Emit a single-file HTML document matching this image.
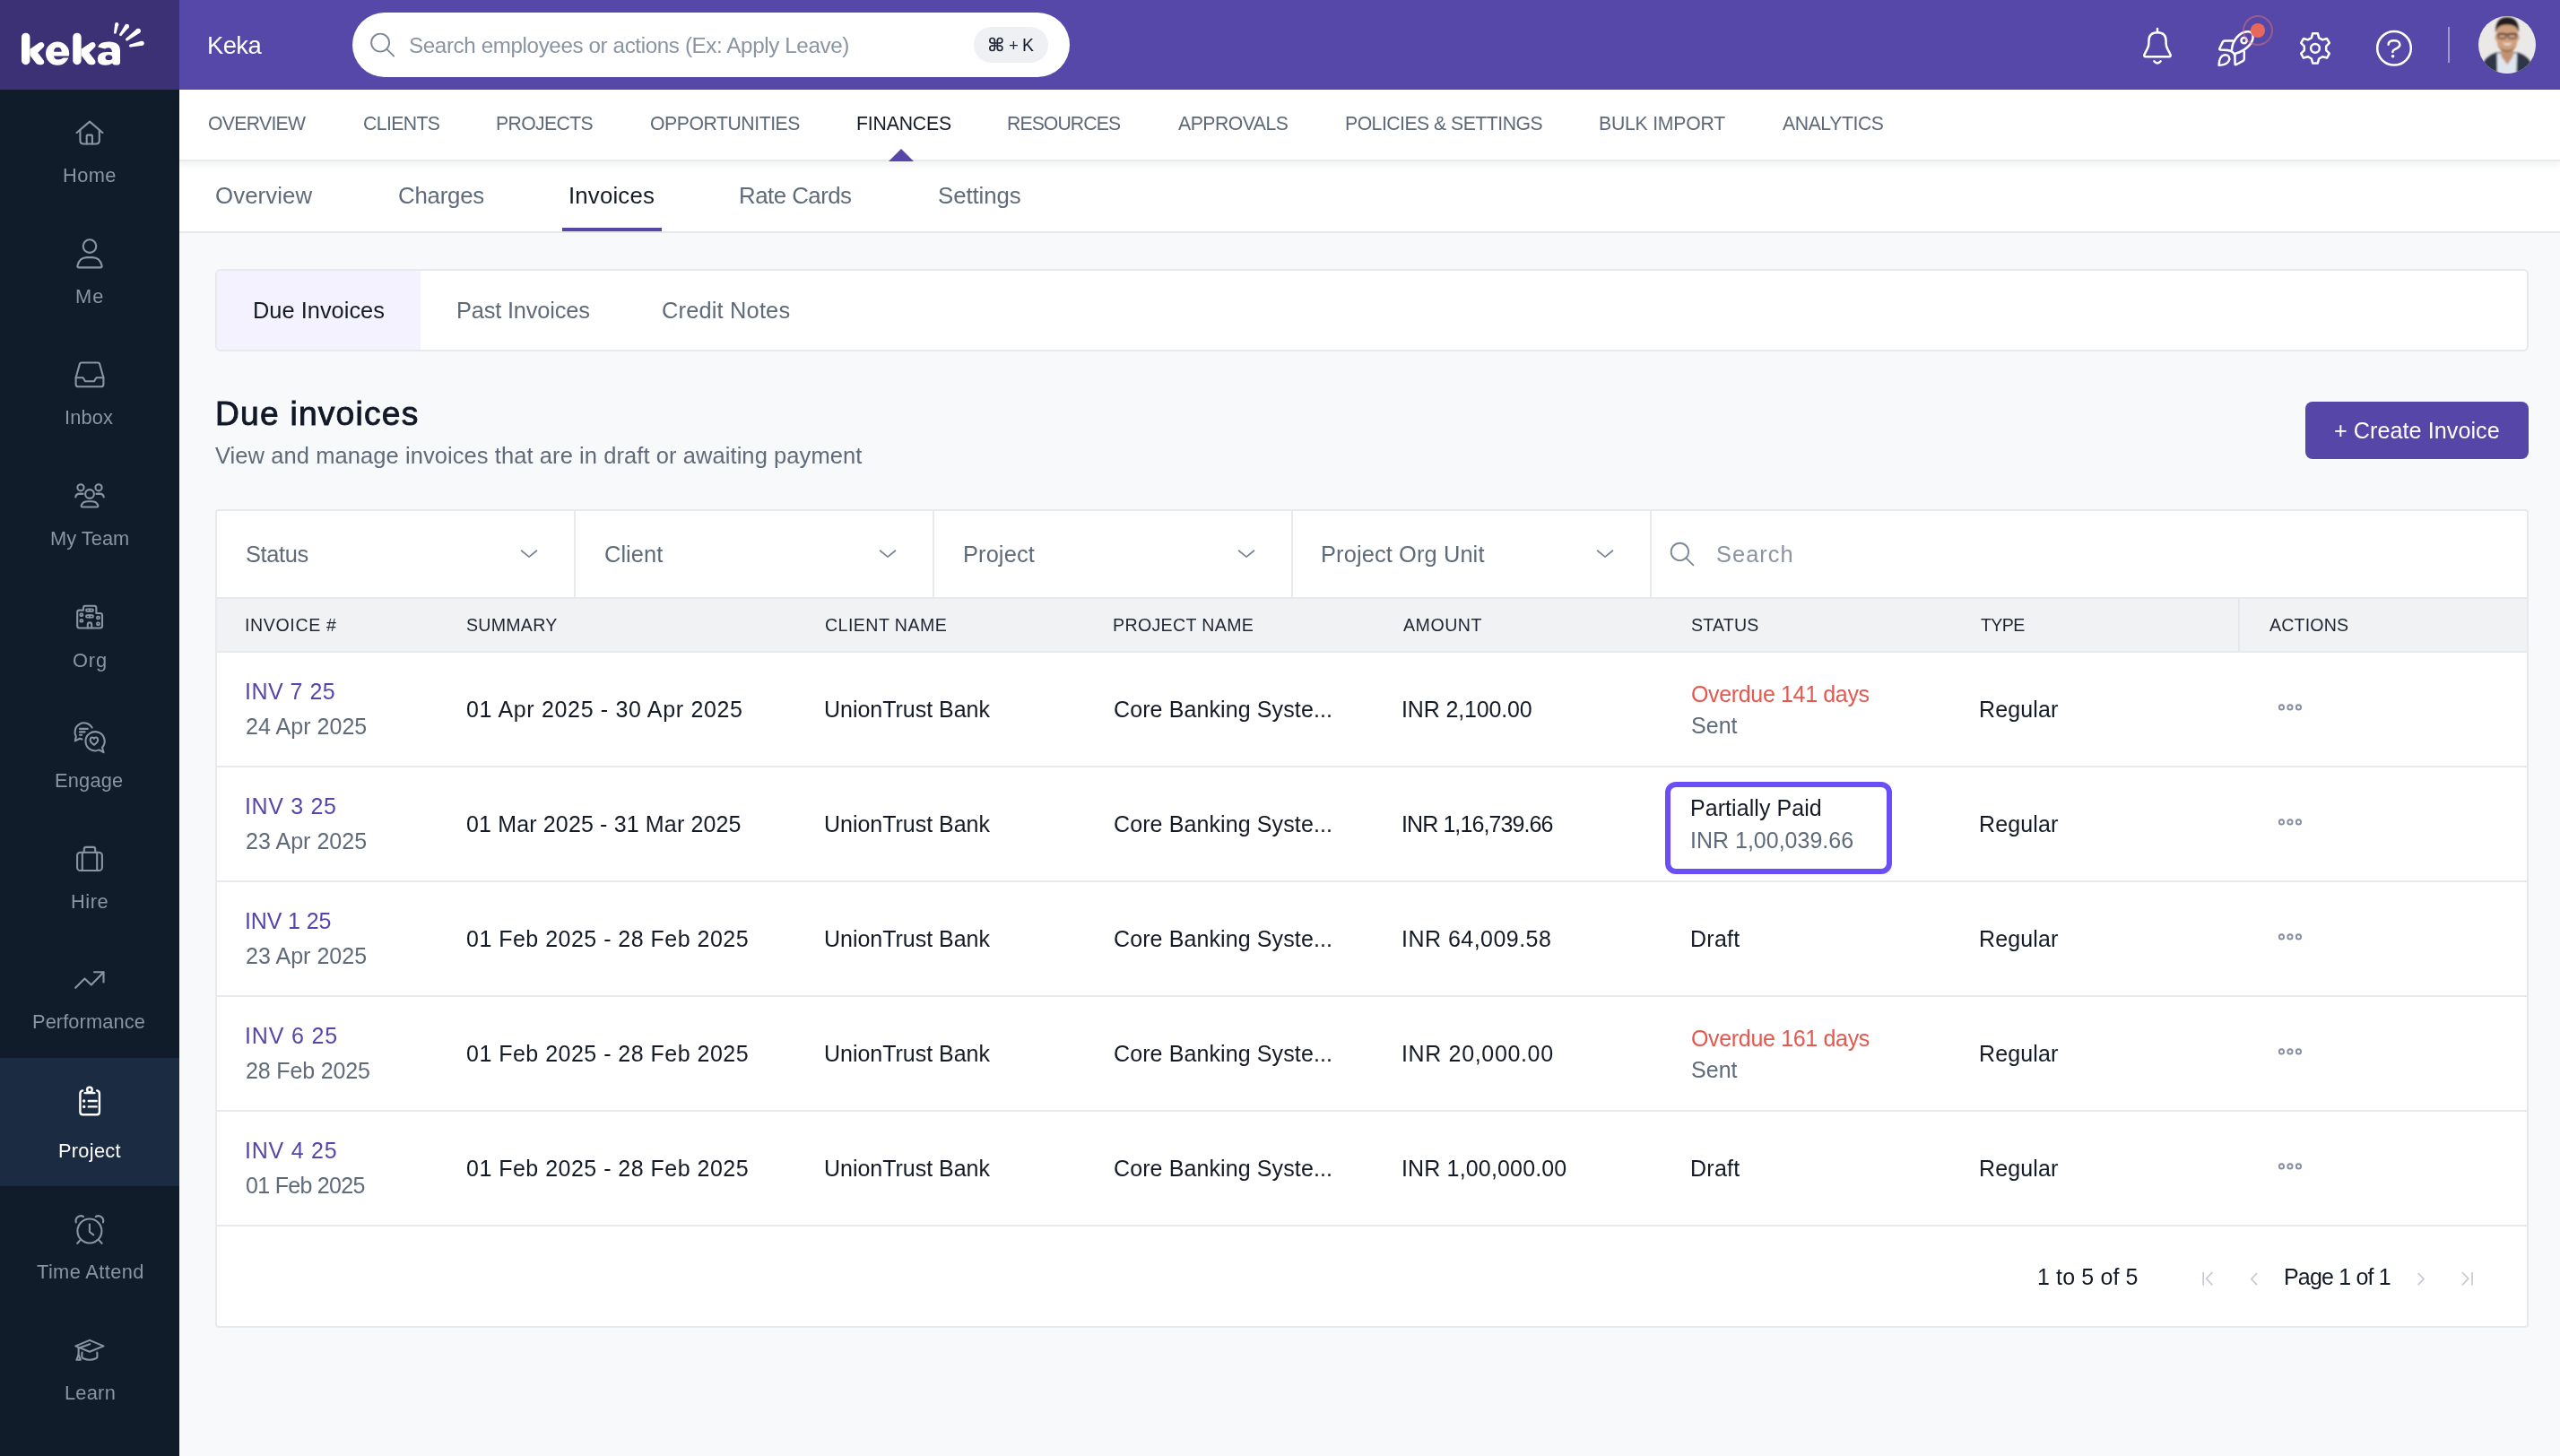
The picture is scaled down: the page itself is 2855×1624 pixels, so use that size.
<!DOCTYPE html><html><head><meta charset="utf-8"><style>
html,body{margin:0;padding:0;}
body{width:2855px;height:1624px;position:relative;overflow:hidden;background:#f8f9fb;font-family:"Liberation Sans",sans-serif;}
.a{position:absolute;box-sizing:border-box;}
.t{position:absolute;white-space:nowrap;line-height:1;will-change:transform;}
svg.ov{position:absolute;left:0;top:0;}
</style></head><body>
<div class="a" style="left:0;top:0;width:200px;height:100px;background:#3d3176"></div>
<div class="a" style="left:200px;top:0;width:2655px;height:100px;background:#5548a8"></div>
<div class="a" style="left:0;top:100px;width:200px;height:1524px;background:#111c2a"></div>
<div class="a" style="left:0;top:1180px;width:200px;height:143px;background:#1b2b42"></div>
<div class="a" style="left:200px;top:178px;width:2655px;height:82px;background:#fff;border-bottom:2px solid #e6e8eb"></div>
<div class="a" style="left:200px;top:100px;width:2655px;height:80px;background:#fff;border-bottom:2px solid #e9eaec;box-shadow:0 3px 8px rgba(17,24,39,0.07)"></div>
<div class="a" style="left:393px;top:14px;width:800px;height:72px;background:#fff;border-radius:36px"></div>
<div class="a" style="left:1086px;top:30px;width:83px;height:40px;background:#eff0f3;border-radius:20px"></div>
<div class="a" style="left:240px;top:300px;width:2580px;height:92px;background:#fff;border:2px solid #e8e9ec;border-radius:6px;overflow:hidden"><div class="a" style="left:0;top:0;width:227px;height:88px;background:#f4f2fe"></div></div>
<div class="a" style="left:2571px;top:448px;width:249px;height:64px;background:#5546a8;border-radius:8px"></div>
<div class="a" style="left:240px;top:568px;width:2580px;height:913px;background:#fff;border:2px solid #e8e9ec;border-radius:4px"></div>
<div class="a" style="left:242px;top:668px;width:2576px;height:58px;background:#f1f2f4"></div>
<div class="a" style="left:242px;top:666px;width:2576px;height:2px;background:#e8e9ec"></div>
<div class="a" style="left:242px;top:726px;width:2576px;height:2px;background:#e8e9ec"></div>
<div class="a" style="left:242px;top:854px;width:2576px;height:2px;background:#e8e9ec"></div>
<div class="a" style="left:242px;top:982px;width:2576px;height:2px;background:#e8e9ec"></div>
<div class="a" style="left:242px;top:1110px;width:2576px;height:2px;background:#e8e9ec"></div>
<div class="a" style="left:242px;top:1238px;width:2576px;height:2px;background:#e8e9ec"></div>
<div class="a" style="left:242px;top:1366px;width:2576px;height:2px;background:#e8e9ec"></div>
<div class="a" style="left:640px;top:570px;width:2px;height:96px;background:#e8e9ec"></div>
<div class="a" style="left:1040px;top:570px;width:2px;height:96px;background:#e8e9ec"></div>
<div class="a" style="left:1440px;top:570px;width:2px;height:96px;background:#e8e9ec"></div>
<div class="a" style="left:1840px;top:570px;width:2px;height:96px;background:#e8e9ec"></div>
<div class="a" style="left:2496px;top:668px;width:2px;height:58px;background:#e6e7ea"></div>
<div class="a" style="left:1857px;top:872px;width:253px;height:103px;border:6px solid #6a4ff6;border-radius:12px"></div>
<svg class="ov" width="2855" height="1624" viewBox="0 0 2855 1624">
<g fill="#fff">
<g transform="translate(0,0)"><path d="M28.7,41.4 L28.7,67.5" stroke="#fff" stroke-width="9.4" stroke-linecap="round"/><path d="M33.4,54.8 L43.6,47.8 Q47.6,45.6 49.2,49.4 Q49.8,51 48.6,52.4 L42.2,58.8 L48.8,67.4 Q50.4,71.6 46,72.2 L44,72.2 Q41.6,72.2 40.2,70.4 L33.4,61.8 Z"/></g>
<g transform="translate(57.25,0)"><path d="M28.7,41.4 L28.7,67.5" stroke="#fff" stroke-width="9.4" stroke-linecap="round"/><path d="M33.4,54.8 L43.6,47.8 Q47.6,45.6 49.2,49.4 Q49.8,51 48.6,52.4 L42.2,58.8 L48.8,67.4 Q50.4,71.6 46,72.2 L44,72.2 Q41.6,72.2 40.2,70.4 L33.4,61.8 Z"/></g>
<circle cx="64.1" cy="59.7" r="13.1"/><path d="M60,57.8 Q60.4,52.8 64.4,52.8 Q68.4,52.8 68.8,57.8 Z" fill="#3d3176"/><path d="M60,62.5 L78,62.5 L78,64.4 L70.6,64.6 Q68.4,66.6 64.6,66.6 Q60.8,66.6 60,62.5 Z" fill="#3d3176"/>
<path d="M109.2,52.6 Q110.6,46.6 121.4,46.6 Q134,46.6 134,57 L134,69.6 Q134,72.4 131.2,72.4 L127.8,72.4 Q125.8,72.4 125.2,70.6 Q122.4,72.8 117.2,72.8 Q108.8,72.8 108.8,65.6 Q108.8,58 119,58 L125,58 Q124.6,53.2 121.2,53.2 Q118.4,53.2 117.2,54.6 Z"/><ellipse cx="121.4" cy="64.2" rx="3.9" ry="2.9" fill="#3d3176"/>
</g>
<path d="M129.57,36.76 L132.26,27.62 L128.14,26.78 L127.03,36.24Z" fill="#fff"/><circle cx="128.3" cy="36.5" r="1.3" fill="#fff"/><circle cx="130.2" cy="27.2" r="2.1" fill="#fff"/>
<path d="M135.63,39.62 L143.52,30.67 L139.48,27.73 L133.37,37.98Z" fill="#fff"/><circle cx="134.5" cy="38.8" r="1.4" fill="#fff"/><circle cx="141.5" cy="29.2" r="2.5" fill="#fff"/>
<path d="M142.40,45.20 L155.82,36.66 L152.58,32.34 L140.60,42.80Z" fill="#fff"/><circle cx="141.5" cy="44.0" r="1.5" fill="#fff"/><circle cx="154.2" cy="34.5" r="2.7" fill="#fff"/>
<path d="M145.82,52.46 L158.74,50.64 L157.66,45.76 L145.18,49.54Z" fill="#fff"/><circle cx="145.5" cy="51.0" r="1.5" fill="#fff"/><circle cx="158.2" cy="48.2" r="2.5" fill="#fff"/>
<g fill="none" stroke="#1f2937" stroke-width="1.7" stroke-linecap="round"><path d="M1109.35,45.25 L1109.35,53.75 M1112.35,45.25 L1112.35,53.75 M1106.6,48.0 L1115.1,48.0 M1106.6,51.0 L1115.1,51.0"/><path d="M1109.35,45.25 A2.75,2.75 0 1 0 1106.6,48.0 M1112.35,45.25 A2.75,2.75 0 1 1 1115.1,48.0 M1112.35,53.75 A2.75,2.75 0 1 0 1115.1,51.0 M1109.35,53.75 A2.75,2.75 0 1 1 1106.6,51.0"/></g>
<g fill="none" stroke="#7d8898" stroke-width="1.9" stroke-linecap="round"><circle cx="424.1" cy="47.6" r="10"/><path d="M431.4,54.9 L439.2,62.6"/></g>
<g fill="none" stroke="#fff" stroke-width="2.5" stroke-linecap="round" stroke-linejoin="round">
<path d="M2406,32 L2406,35.5"/>
<path d="M2393.2,63.2 L2418.8,63.2 Q2421.6,63.2 2420.4,60.6 L2417.2,54.4 Q2415.6,51.4 2415.6,48 L2415.6,45.8 Q2415.6,36.2 2406,36.2 Q2396.4,36.2 2396.4,45.8 L2396.4,48 Q2396.4,51.4 2394.8,54.4 L2391.6,60.6 Q2390.4,63.2 2393.2,63.2 Z"/>
<path d="M2402.4,68.2 Q2406,72.6 2409.6,68.2"/>
<path d="M2489,55.4 C2489.6,45.4 2497.4,35.4 2506.6,35.2 C2511,35.1 2513,37.6 2512.6,41.6 C2512,49.6 2503.6,56.6 2493,59.8"/><path d="M2484,56 Q2490.6,56.4 2492.4,62"/>
<path d="M2489.8,45.4 L2481,45.4 Q2479.6,45.4 2479,46.6 L2475.4,54 Q2474.8,55.4 2476.4,55.5 L2484,56"/>
<path d="M2502.8,57.8 L2502.8,65.8 Q2502.8,67.2 2501.6,67.8 L2494,72 Q2492.6,72.8 2492.6,71.2 L2492.4,62"/>
<path d="M2474.6,72.8 C2474.6,67 2476.6,61.6 2481.4,61.2 C2485.6,61 2487.4,64.6 2485.6,68 C2483.8,71.4 2479,72.8 2474.6,72.8 Z"/>
<circle cx="2502.6" cy="45.2" r="3.1"/>
</g>
<circle cx="2518" cy="34" r="16" fill="none" stroke="rgba(236,120,110,0.45)" stroke-width="2"/>
<circle cx="2518" cy="34" r="8.1" fill="#e8685c"/>
<g fill="none" stroke="#fff" stroke-width="2.5" stroke-linejoin="round" stroke-linecap="round"><path d="M2577.86,42.11 L2579.21,37.13 L2584.79,37.13 L2586.14,42.11 L2590.05,44.37 L2595.04,43.05 L2597.83,47.88 L2594.19,51.54 L2594.19,56.06 L2597.83,59.72 L2595.04,64.55 L2590.05,63.23 L2586.14,65.49 L2584.79,70.47 L2579.21,70.47 L2577.86,65.49 L2573.95,63.23 L2568.96,64.55 L2566.17,59.72 L2569.81,56.06 L2569.81,51.54 L2566.17,47.88 L2568.96,43.05 L2573.95,44.37Z"/><circle cx="2582" cy="53.8" r="4.9"/>
<circle cx="2670" cy="53.8" r="18.8"/><path d="M2663.6,49.8 C2663.6,46.8 2666.4,45.2 2670,45.2 C2673.8,45.2 2676.4,47 2676.4,49.8 C2676.4,52.8 2673.4,53.8 2670.6,55.2 C2668.8,56 2668.4,56.8 2668.4,58"/></g>
<circle cx="2668.6" cy="62.8" r="1.8" fill="#fff"/>
<path d="M2731,30 L2731,70" stroke="rgba(255,255,255,0.45)" stroke-width="2"/>
<defs><clipPath id="av"><circle cx="2796" cy="50" r="32"/></clipPath><filter id="bl" filterUnits="userSpaceOnUse" x="2750" y="5" width="100" height="95"><feGaussianBlur stdDeviation="0.9"/></filter></defs>
<g clip-path="url(#av)"><rect x="2760" y="14" width="72" height="72" fill="#ebe9e7"/><g filter="url(#bl)">
<path d="M2766,86 L2767,76 Q2770,63 2784,58.6 L2808,58.6 Q2822,63 2825,76 L2826,86 Z" fill="#2e3446"/>
<path d="M2784.6,59.5 L2807,59.5 L2806.4,86 L2785.2,86 Z" fill="#dfe5ee"/>
<path d="M2789,54 L2803,54 L2802.6,63 L2796.2,72 L2789.6,63 Z" fill="#c29170"/>
<ellipse cx="2784.6" cy="41.5" rx="1.9" ry="3.6" fill="#c89775"/><ellipse cx="2807.6" cy="41.5" rx="1.9" ry="3.6" fill="#c89775"/>
<path d="M2784.5,36 Q2784.5,25.5 2796,25.5 Q2807.5,25.5 2807.5,36 L2807.5,46 Q2806.5,57.5 2796,59 Q2785.5,57.5 2784.5,46 Z" fill="#d0a07d"/>
<path d="M2786.5,50.5 Q2788,57 2796,58.6 Q2804,57 2805.5,50.5 Q2803,55.5 2796,56 Q2789,55.5 2786.5,50.5 Z" fill="#5a4030" opacity="0.55"/>
<path d="M2783.2,36.5 Q2782.5,19 2796.2,19.2 Q2809.6,19.4 2809,36.5 L2807.6,33.6 Q2806.6,27.6 2796,27.4 Q2785.8,27.6 2784.6,33.6 Z" fill="#221c1a"/>
<path d="M2785,38.2 L2807.4,38.2" stroke="#3a3431" stroke-width="1.2"/><rect x="2786.2" y="37.4" width="8.6" height="5.4" rx="1.8" fill="none" stroke="#3a3431" stroke-width="1.3"/><rect x="2797.4" y="37.4" width="8.6" height="5.4" rx="1.8" fill="none" stroke="#3a3431" stroke-width="1.3"/>
<path d="M2790.5,47.6 Q2796.2,53.6 2802,47.6 Q2796.2,49.4 2790.5,47.6 Z" fill="#f3eded"/>
</g></g>
<path d="M991,180 L1005,166 L1019,180 Z" fill="#5546a8"/>
<rect x="627" y="254" width="111" height="4" fill="#5546a8"/>
<g fill="none" stroke="#7b8697" stroke-width="1.8" stroke-linecap="round" stroke-linejoin="round">
<path d="M581.6,614.2 L590.0500000000001,621.1 L598.4,614.2"/>
<path d="M981.6,614.2 L990.0500000000001,621.1 L998.4,614.2"/>
<path d="M1381.6,614.2 L1390.05,621.1 L1398.3999999999999,614.2"/>
<path d="M1781.6,614.2 L1790.05,621.1 L1798.3999999999999,614.2"/>
</g>
<g fill="none" stroke="#7d8898" stroke-width="1.9" stroke-linecap="round"><circle cx="1873.4" cy="615.4" r="9.7"/><path d="M1880.3,622.3 L1888.4,630.4"/></g>
<g fill="none" stroke="#858fa0" stroke-width="1.9"><circle cx="2544.45" cy="788.9" r="2.6"/><circle cx="2553.95" cy="788.9" r="2.6"/><circle cx="2563.45" cy="788.9" r="2.6"/></g>
<g fill="none" stroke="#858fa0" stroke-width="1.9"><circle cx="2544.45" cy="916.9" r="2.6"/><circle cx="2553.95" cy="916.9" r="2.6"/><circle cx="2563.45" cy="916.9" r="2.6"/></g>
<g fill="none" stroke="#858fa0" stroke-width="1.9"><circle cx="2544.45" cy="1044.9" r="2.6"/><circle cx="2553.95" cy="1044.9" r="2.6"/><circle cx="2563.45" cy="1044.9" r="2.6"/></g>
<g fill="none" stroke="#858fa0" stroke-width="1.9"><circle cx="2544.45" cy="1172.9" r="2.6"/><circle cx="2553.95" cy="1172.9" r="2.6"/><circle cx="2563.45" cy="1172.9" r="2.6"/></g>
<g fill="none" stroke="#858fa0" stroke-width="1.9"><circle cx="2544.45" cy="1300.9" r="2.6"/><circle cx="2553.95" cy="1300.9" r="2.6"/><circle cx="2563.45" cy="1300.9" r="2.6"/></g>
<g fill="none" stroke="#c5cad2" stroke-width="1.7" stroke-linecap="round" stroke-linejoin="round">
<path d="M2457.2,1419.5 L2457.2,1433"/><path d="M2467,1419.5 L2460.6,1426.2 L2467,1433"/>
<path d="M2516.6,1420.5 L2510.8,1426.6 L2516.6,1432.6"/>
<path d="M2697.2,1420.5 L2703,1426.6 L2697.2,1432.6"/>
<path d="M2746.4,1419.5 L2752.8,1426.2 L2746.4,1433"/><path d="M2757,1419.5 L2757,1433"/>
</g>
<g fill="none" stroke="#8a95a4" stroke-width="2.1" stroke-linecap="round" stroke-linejoin="round">
<path d="M85.6,148 L100,135.6 L114.4,148"/><path d="M89.4,145 L89.4,156.5 Q89.4,160.5 93.4,160.5 L106.8,160.5 Q110.8,160.5 110.8,156.5 L110.8,145"/><path d="M96.7,160.5 L96.7,151.6 Q96.7,150.6 97.7,150.6 L101.9,150.6 Q102.9,150.6 102.9,151.6 L102.9,160.5"/>
<circle cx="100" cy="274.6" r="7.3"/><path d="M88,298.4 L112,298.4 Q114,298.4 113.6,296.4 Q111.4,287.1 103,287.1 L97,287.1 Q88.6,287.1 86.4,296.4 Q86,298.4 88,298.4 Z"/>
<path d="M84.6,421.3 L89,405.6 Q89.4,404.5 90.6,404.5 L109.4,404.5 Q110.6,404.5 111,405.6 L115.4,421.3 L115.4,428.4 Q115.4,431.3 112.5,431.3 L87.5,431.3 Q84.6,431.3 84.6,428.4 Z"/><path d="M84.6,421.3 L92.6,421.3 L95,425.2 L105,425.2 L107.4,421.3 L115.4,421.3"/>
<circle cx="90" cy="543.8" r="3.6"/><circle cx="110" cy="543.8" r="3.6"/><circle cx="100" cy="551" r="4.9"/><path d="M92,565.5 L108,565.5 Q109.6,565.5 109.3,563.9 Q108,559.3 102,559.3 L98,559.3 Q92,559.3 90.7,563.9 Q90.4,565.5 92,565.5 Z"/><path d="M84.3,554.5 C84.5,551.5 86.5,550.6 89.5,550.6 L92.6,550.9"/><path d="M115.7,554.5 C115.5,551.5 113.5,550.6 110.5,550.6 L107.4,550.9"/>
<path d="M88.6,700.5 L111.6,700.5 Q114,700.5 114,698 L114,686.4 Q114,684 111.6,684 L107.4,684 L107.4,678.2 Q107.4,675.8 105,675.8 L95.4,675.8 Q93,675.8 93,678.2 L93,680.6 L88.6,680.6 Q86.2,680.6 86.2,683 L86.2,698 Q86.2,700.5 88.6,700.5 Z"/>
<g stroke-width="1.8"><rect x="96.1" y="679.3" width="7.8" height="2.6" rx="1"/><path d="M100,679.3 L100,681.9"/><rect x="96.1" y="686.1" width="7.8" height="2.6" rx="1"/><path d="M100,686.1 L100,688.7"/><rect x="89.4" y="684.4" width="2.9" height="2.6" rx="0.8"/><rect x="89.4" y="691.1" width="2.9" height="2.6" rx="0.8"/><rect x="108" y="687.7" width="2.9" height="2.6" rx="0.8"/><rect x="108" y="694.4" width="2.9" height="2.6" rx="0.8"/></g><path d="M97.8,700.5 L97.8,696.8 Q97.8,694.4 100,694.4 Q102.2,694.4 102.2,696.8 L102.2,700.5"/>
<path d="M102.6,811.6 A10,10 0 1 0 84.8,821.4 L83.8,826.4 L89,823.8 L91.4,824.6"/><path d="M89,812.9 L97.8,812.9 M89,816.4 L94.6,816.4 M89,819.7 L91.2,819.7"/>
<path d="M114,833.8 A10.6,10.6 0 1 0 110.5,836.4 L115.5,839.2 Z"/><path d="M104.9,830.8 C101.5,828.5 100.6,826.8 100.6,825.2 C100.6,822.3 103.8,821.6 104.9,823.8 C106,821.6 109.2,822.3 109.2,825.2 C109.2,826.8 108.3,828.5 104.9,830.8 Z"/>
<rect x="86.1" y="950.7" width="27.8" height="20.3" rx="3.6"/><path d="M93.8,950.7 L93.8,947.3 Q93.8,944.9 96.2,944.9 L103.8,944.9 Q106.2,944.9 106.2,947.3 L106.2,950.7"/><path d="M91.8,950.7 L91.8,971 M108.2,950.7 L108.2,971"/>
<path d="M84.2,1101.8 L94.4,1091.5 L101.8,1098.6 L115.4,1084.4"/><path d="M105,1084.3 L115.5,1084.3 L115.5,1095.4"/>
<circle cx="99.9" cy="1373" r="13.5"/><path d="M89.8,1382.9 L86.2,1386.8 M110,1382.9 L113.6,1386.8"/><path d="M84.8,1363.4 A5.6,5.6 0 0 1 93,1357"/><path d="M115,1363.4 A5.6,5.6 0 0 0 106.8,1357"/><path d="M99.9,1365.6 L99.9,1374 L104.3,1377.3"/>
<path d="M99.9,1494.9 L115.5,1501.4 L99.9,1507.7 L84.3,1501.4 Z"/><path d="M91.5,1508.6 L91.3,1513 Q91.3,1514.6 93,1515.3 Q99.9,1518.2 106.8,1515.3 Q108.5,1514.6 108.5,1513 L108.3,1508.6"/><path d="M87.6,1503.2 L87.6,1511.5"/><path d="M87.6,1511 L85.4,1516.8 L89.8,1516.8 Z"/><path d="M88,1503.4 L100.2,1499.2"/>
</g>
<g fill="none" stroke="#fff" stroke-width="2.4" stroke-linecap="round" stroke-linejoin="round"><path d="M92.2,1216.4 Q89.4,1217 89.4,1220 L89.4,1240.2 Q89.4,1243.2 92.4,1243.2 L107.9,1243.2 Q110.9,1243.2 110.9,1240.2 L110.9,1220 Q110.9,1217 108.1,1216.4"/><circle cx="99.9" cy="1215.4" r="2.8"/><path d="M94.6,1219.1 L105.4,1219.1"/><path d="M98.8,1228 L107.6,1228 M98.8,1234.4 L107.6,1234.4"/></g><circle cx="93.7" cy="1228" r="1.7" fill="#fff"/><circle cx="93.7" cy="1234.4" r="1.7" fill="#fff"/>
</svg>
<div class="t" style="left:230.74px;top:37.21px;font-size:27.4px;color:#ffffff;letter-spacing:-0.604px;">Keka</div>
<div class="t" style="left:456.41px;top:39.31px;font-size:24.2px;color:#8a94a3;letter-spacing:-0.384px;">Search employees or actions (Ex: Apply Leave)</div>
<div class="t" style="left:1125.12px;top:41.94px;font-size:18.5px;color:#1f2937;">+</div>
<div class="t" style="left:1140.20px;top:40.78px;font-size:19.4px;color:#111827;">K</div>
<div class="t" style="left:231.89px;top:127.45px;font-size:21.2px;color:#5e6978;letter-spacing:-0.683px;">OVERVIEW</div>
<div class="t" style="left:405.34px;top:127.45px;font-size:21.2px;color:#5e6978;letter-spacing:-0.593px;">CLIENTS</div>
<div class="t" style="left:553.45px;top:127.45px;font-size:21.2px;color:#5e6978;letter-spacing:-0.628px;">PROJECTS</div>
<div class="t" style="left:725.29px;top:127.45px;font-size:21.2px;color:#5e6978;letter-spacing:-0.435px;">OPPORTUNITIES</div>
<div class="t" style="left:954.65px;top:127.45px;font-size:21.2px;color:#141b26;letter-spacing:-0.145px;">FINANCES</div>
<div class="t" style="left:1123.35px;top:127.45px;font-size:21.2px;color:#5e6978;letter-spacing:-0.900px;">RESOURCES</div>
<div class="t" style="left:1314.45px;top:127.45px;font-size:21.2px;color:#5e6978;letter-spacing:-0.484px;">APPROVALS</div>
<div class="t" style="left:1499.75px;top:127.45px;font-size:21.2px;color:#5e6978;letter-spacing:-0.503px;">POLICIES &amp; SETTINGS</div>
<div class="t" style="left:1782.75px;top:127.45px;font-size:21.2px;color:#5e6978;letter-spacing:-0.209px;">BULK IMPORT</div>
<div class="t" style="left:1988.45px;top:127.45px;font-size:21.2px;color:#5e6978;letter-spacing:-0.403px;">ANALYTICS</div>
<div class="t" style="left:239.87px;top:206.16px;font-size:25.8px;color:#5f6b7a;letter-spacing:0.091px;">Overview</div>
<div class="t" style="left:444.21px;top:206.16px;font-size:25.8px;color:#5f6b7a;letter-spacing:-0.222px;">Charges</div>
<div class="t" style="left:634.11px;top:206.16px;font-size:25.8px;color:#141b26;letter-spacing:0.167px;">Invoices</div>
<div class="t" style="left:824.17px;top:206.16px;font-size:25.8px;color:#5f6b7a;letter-spacing:-0.495px;">Rate Cards</div>
<div class="t" style="left:1046.24px;top:206.16px;font-size:25.8px;color:#5f6b7a;letter-spacing:-0.077px;">Settings</div>
<div class="t" style="left:70.00px;top:185.45px;font-size:21.8px;color:#8a95a4;letter-spacing:0.391px;">Home</div>
<div class="t" style="left:84.00px;top:320.05px;font-size:21.8px;color:#8a95a4;letter-spacing:0.977px;">Me</div>
<div class="t" style="left:72.38px;top:455.25px;font-size:21.8px;color:#8a95a4;letter-spacing:0.133px;">Inbox</div>
<div class="t" style="left:55.90px;top:590.25px;font-size:21.8px;color:#8a95a4;letter-spacing:0.033px;">My Team</div>
<div class="t" style="left:81.31px;top:725.85px;font-size:21.8px;color:#8a95a4;letter-spacing:0.851px;">Org</div>
<div class="t" style="left:61.20px;top:859.85px;font-size:21.8px;color:#8a95a4;letter-spacing:0.214px;">Engage</div>
<div class="t" style="left:78.65px;top:994.85px;font-size:21.8px;color:#8a95a4;letter-spacing:0.592px;">Hire</div>
<div class="t" style="left:36.45px;top:1129.35px;font-size:21.8px;color:#8a95a4;letter-spacing:0.097px;">Performance</div>
<div class="t" style="left:64.50px;top:1272.85px;font-size:21.8px;color:#ffffff;letter-spacing:0.285px;">Project</div>
<div class="t" style="left:40.71px;top:1407.85px;font-size:21.8px;color:#8a95a4;letter-spacing:0.377px;">Time Attend</div>
<div class="t" style="left:71.60px;top:1543.35px;font-size:21.8px;color:#8a95a4;letter-spacing:0.252px;">Learn</div>
<div class="t" style="left:281.90px;top:334.10px;font-size:25.4px;color:#141b26;letter-spacing:0.016px;">Due Invoices</div>
<div class="t" style="left:508.90px;top:334.10px;font-size:25.4px;color:#5f6b7a;letter-spacing:-0.174px;">Past Invoices</div>
<div class="t" style="left:737.73px;top:334.10px;font-size:25.4px;color:#5f6b7a;letter-spacing:0.182px;">Credit Notes</div>
<div class="t" style="left:240.33px;top:442.51px;font-size:37.2px;color:#111827;letter-spacing:1.218px;-webkit-text-stroke:0.9px #111827;">Due invoices</div>
<div class="t" style="left:240.47px;top:496.21px;font-size:25.5px;color:#5f6b7a;letter-spacing:0.074px;">View and manage invoices that are in draft or awaiting payment</div>
<div class="t" style="left:2603.30px;top:468.07px;font-size:25.2px;color:#ffffff;letter-spacing:0.041px;">+ Create Invoice</div>
<div class="t" style="left:273.86px;top:606.10px;font-size:25.4px;color:#5f6b7a;letter-spacing:-0.355px;">Status</div>
<div class="t" style="left:673.93px;top:606.10px;font-size:25.4px;color:#5f6b7a;letter-spacing:0.060px;">Client</div>
<div class="t" style="left:1073.50px;top:606.10px;font-size:25.4px;color:#5f6b7a;letter-spacing:0.121px;">Project</div>
<div class="t" style="left:1473.40px;top:606.10px;font-size:25.4px;color:#5f6b7a;letter-spacing:0.122px;">Project Org Unit</div>
<div class="t" style="left:1913.86px;top:606.10px;font-size:25.4px;color:#8a94a3;letter-spacing:1.055px;">Search</div>
<div class="t" style="left:273.29px;top:687.81px;font-size:19.6px;color:#1f2633;letter-spacing:0.617px;">INVOICE #</div>
<div class="t" style="left:519.92px;top:687.81px;font-size:19.6px;color:#1f2633;letter-spacing:0.243px;">SUMMARY</div>
<div class="t" style="left:919.82px;top:687.81px;font-size:19.6px;color:#1f2633;letter-spacing:0.439px;">CLIENT NAME</div>
<div class="t" style="left:1241.18px;top:687.81px;font-size:19.6px;color:#1f2633;letter-spacing:0.339px;">PROJECT NAME</div>
<div class="t" style="left:1565.35px;top:687.81px;font-size:19.6px;color:#1f2633;letter-spacing:0.515px;">AMOUNT</div>
<div class="t" style="left:1886.32px;top:687.81px;font-size:19.6px;color:#1f2633;letter-spacing:0.187px;">STATUS</div>
<div class="t" style="left:2208.96px;top:687.81px;font-size:19.6px;color:#1f2633;letter-spacing:-0.644px;">TYPE</div>
<div class="t" style="left:2531.15px;top:687.81px;font-size:19.6px;color:#1f2633;letter-spacing:0.168px;">ACTIONS</div>
<div class="t" style="left:273.09px;top:759.44px;font-size:25.0px;color:#5646ab;letter-spacing:0.495px;">INV 7 25</div>
<div class="t" style="left:273.95px;top:797.64px;font-size:25.0px;color:#5f6b7a;letter-spacing:0.044px;">24 Apr 2025</div>
<div class="t" style="left:520.00px;top:779.44px;font-size:25.0px;color:#141b26;letter-spacing:0.672px;">01 Apr 2025 - 30 Apr 2025</div>
<div class="t" style="left:919.26px;top:779.44px;font-size:25.0px;color:#141b26;letter-spacing:-0.022px;">UnionTrust Bank</div>
<div class="t" style="left:1241.55px;top:779.44px;font-size:25.0px;color:#141b26;letter-spacing:0.109px;">Core Banking Syste...</div>
<div class="t" style="left:1562.69px;top:779.44px;font-size:25.0px;color:#141b26;letter-spacing:-0.151px;">INR 2,100.00</div>
<div class="t" style="left:1886.11px;top:761.64px;font-size:25.0px;color:#e4584f;letter-spacing:-0.350px;">Overdue 141 days</div>
<div class="t" style="left:1886.17px;top:797.44px;font-size:25.0px;color:#5f6b7a;letter-spacing:0.025px;">Sent</div>
<div class="t" style="left:2206.94px;top:779.44px;font-size:25.0px;color:#141b26;letter-spacing:0.146px;">Regular</div>
<div class="t" style="left:273.09px;top:887.44px;font-size:25.0px;color:#5646ab;letter-spacing:0.652px;">INV 3 25</div>
<div class="t" style="left:273.95px;top:925.64px;font-size:25.0px;color:#5f6b7a;letter-spacing:0.024px;">23 Apr 2025</div>
<div class="t" style="left:520.00px;top:907.44px;font-size:25.0px;color:#141b26;letter-spacing:0.148px;">01 Mar 2025 - 31 Mar 2025</div>
<div class="t" style="left:919.26px;top:907.44px;font-size:25.0px;color:#141b26;letter-spacing:-0.022px;">UnionTrust Bank</div>
<div class="t" style="left:1241.55px;top:907.44px;font-size:25.0px;color:#141b26;letter-spacing:0.109px;">Core Banking Syste...</div>
<div class="t" style="left:1562.69px;top:907.44px;font-size:25.0px;color:#141b26;letter-spacing:-0.906px;">INR 1,16,739.66</div>
<div class="t" style="left:1885.24px;top:889.04px;font-size:25.0px;color:#141b26;letter-spacing:0.058px;">Partially Paid</div>
<div class="t" style="left:1884.99px;top:924.84px;font-size:25.0px;color:#5f6b7a;">INR 1,00,039.66</div>
<div class="t" style="left:2206.94px;top:907.44px;font-size:25.0px;color:#141b26;letter-spacing:0.146px;">Regular</div>
<div class="t" style="left:273.09px;top:1015.44px;font-size:25.0px;color:#5646ab;letter-spacing:-0.134px;">INV 1 25</div>
<div class="t" style="left:273.95px;top:1053.64px;font-size:25.0px;color:#5f6b7a;letter-spacing:0.024px;">23 Apr 2025</div>
<div class="t" style="left:520.00px;top:1035.44px;font-size:25.0px;color:#141b26;letter-spacing:0.483px;">01 Feb 2025 - 28 Feb 2025</div>
<div class="t" style="left:919.26px;top:1035.44px;font-size:25.0px;color:#141b26;letter-spacing:-0.022px;">UnionTrust Bank</div>
<div class="t" style="left:1241.55px;top:1035.44px;font-size:25.0px;color:#141b26;letter-spacing:0.109px;">Core Banking Syste...</div>
<div class="t" style="left:1562.69px;top:1035.44px;font-size:25.0px;color:#141b26;letter-spacing:0.474px;">INR 64,009.58</div>
<div class="t" style="left:1885.44px;top:1035.44px;font-size:25.0px;color:#141b26;letter-spacing:0.266px;">Draft</div>
<div class="t" style="left:2206.94px;top:1035.44px;font-size:25.0px;color:#141b26;letter-spacing:0.146px;">Regular</div>
<div class="t" style="left:273.09px;top:1143.44px;font-size:25.0px;color:#5646ab;letter-spacing:0.837px;">INV 6 25</div>
<div class="t" style="left:273.95px;top:1181.64px;font-size:25.0px;color:#5f6b7a;letter-spacing:-0.153px;">28 Feb 2025</div>
<div class="t" style="left:520.00px;top:1163.44px;font-size:25.0px;color:#141b26;letter-spacing:0.483px;">01 Feb 2025 - 28 Feb 2025</div>
<div class="t" style="left:919.26px;top:1163.44px;font-size:25.0px;color:#141b26;letter-spacing:-0.022px;">UnionTrust Bank</div>
<div class="t" style="left:1241.55px;top:1163.44px;font-size:25.0px;color:#141b26;letter-spacing:0.109px;">Core Banking Syste...</div>
<div class="t" style="left:1562.69px;top:1163.44px;font-size:25.0px;color:#141b26;letter-spacing:0.655px;">INR 20,000.00</div>
<div class="t" style="left:1886.11px;top:1145.64px;font-size:25.0px;color:#e4584f;letter-spacing:-0.330px;">Overdue 161 days</div>
<div class="t" style="left:1886.17px;top:1181.44px;font-size:25.0px;color:#5f6b7a;letter-spacing:0.025px;">Sent</div>
<div class="t" style="left:2206.94px;top:1163.44px;font-size:25.0px;color:#141b26;letter-spacing:0.146px;">Regular</div>
<div class="t" style="left:273.09px;top:1271.44px;font-size:25.0px;color:#5646ab;letter-spacing:0.752px;">INV 4 25</div>
<div class="t" style="left:274.20px;top:1309.64px;font-size:25.0px;color:#5f6b7a;letter-spacing:-0.707px;">01 Feb 2025</div>
<div class="t" style="left:520.00px;top:1291.44px;font-size:25.0px;color:#141b26;letter-spacing:0.483px;">01 Feb 2025 - 28 Feb 2025</div>
<div class="t" style="left:919.26px;top:1291.44px;font-size:25.0px;color:#141b26;letter-spacing:-0.022px;">UnionTrust Bank</div>
<div class="t" style="left:1241.55px;top:1291.44px;font-size:25.0px;color:#141b26;letter-spacing:0.109px;">Core Banking Syste...</div>
<div class="t" style="left:1562.69px;top:1291.44px;font-size:25.0px;color:#141b26;letter-spacing:0.156px;">INR 1,00,000.00</div>
<div class="t" style="left:1885.44px;top:1291.44px;font-size:25.0px;color:#141b26;letter-spacing:0.266px;">Draft</div>
<div class="t" style="left:2206.94px;top:1291.44px;font-size:25.0px;color:#141b26;letter-spacing:0.146px;">Regular</div>
<div class="t" style="left:2271.62px;top:1411.84px;font-size:25.0px;color:#141b26;letter-spacing:0.129px;">1 to 5 of 5</div>
<div class="t" style="left:2546.94px;top:1411.84px;font-size:25.0px;color:#141b26;letter-spacing:-0.812px;">Page 1 of 1</div>
</body></html>
